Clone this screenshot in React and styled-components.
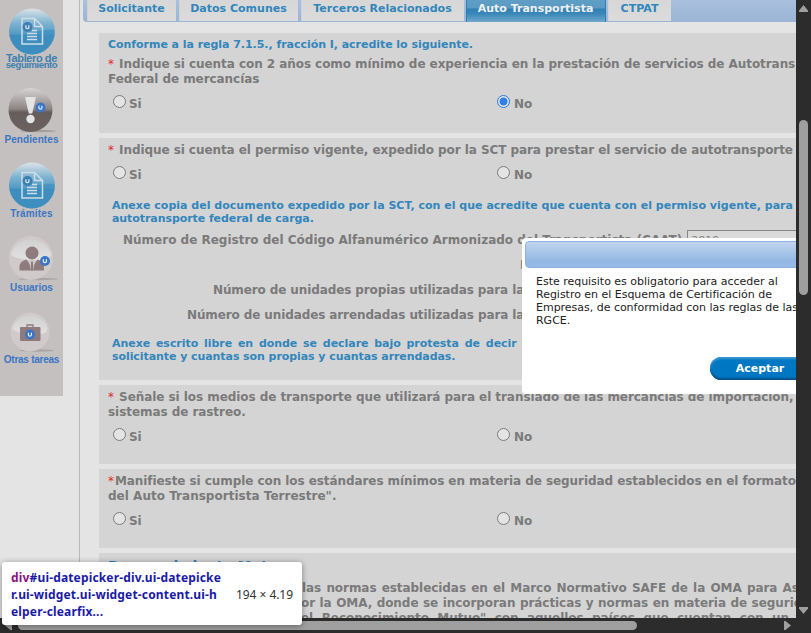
import React from 'react';
import styled, { createGlobalStyle, css } from 'styled-components';

const GlobalStyle = createGlobalStyle`
  * { box-sizing: border-box; }
  body { margin: 0; background: #e4e4e4; overflow: hidden; }
`;

const Screen = styled.div`
  position: relative;
  display: grid;
  grid-template: 618px 15px / 796px 15px;
  width: 811px;
  height: 633px;
  overflow: hidden;
  background: #2c2c2c;
  font-family: "DejaVu Sans", Verdana, sans-serif;
`;

const Viewport = styled.div`
  position: relative;
  display: flex;
  align-items: flex-start;
  overflow: hidden;
  background: #e4e4e4;
`;

/* ---------- sidebar ---------- */

const Sidebar = styled.nav`
  flex: none;
  width: 63px;
  height: 396px;
  padding-top: 8px;
  background: #c4c0bf;
`;

const SideItem = styled.a`
  display: flex;
  flex-direction: column;
  align-items: center;
  height: ${p => p.$h}px;
`;

const SideIcon = styled.svg`
  display: block;
  flex: none;
`;

const SideLabel = styled.span`
  margin-top: ${p => p.$mt || 0}px;
  font: bold ${p => p.$size || 10}px/${p => p.$lh || 10}px "Liberation Sans", Arial, sans-serif;
  letter-spacing: ${p => p.$ls || 0}px;
  color: ${p => p.$color || '#3b75c4'};
  white-space: nowrap;
`;

/* ---------- tabs ---------- */

const Main = styled.main`
  flex: none;
  width: 717px;
  height: 618px;
  margin-left: 16px;
  border-left: 1px solid #b9b9b9;
`;

const TabBar = styled.div`
  display: flex;
  height: 22px;
  margin-left: 3px;
  padding-left: 4px;
  overflow: hidden;
  border-bottom-left-radius: 4px;
  background: linear-gradient(#a9c0de, #9bb5d5);
`;

const Tab = styled.a`
  flex: none;
  width: ${p => p.$w}px;
  height: 21px;
  margin-right: ${p => p.$gap ?? 3}px;
  padding: 2px 1px 0 0;
  text-align: center;
  font-size: 11px;
  font-weight: bold;
  line-height: 13px;
  white-space: nowrap;
  color: #3286bb;
  border-left: 1px solid #cfd3d8;
  background: linear-gradient(#d6d7d6, #dbdbdb);
  ${p => p.$active && css`
    height: 22px;
    color: #f0f0f0;
    border: solid #2b7fb2;
    border-width: 0 1px;
    background: linear-gradient(#5f9fc6 0, #5a9bc3 8px, #2f80b4 9px, #3c88b9 14px, #70a8ca 22px);
  `}
`;

/* ---------- form panels ---------- */

const Panels = styled.div`
  display: flex;
  flex-direction: column;
  gap: 5px;
  margin: 11px 0 0 19px;
`;

const Panel = styled.section`
  flex: none;
  height: ${p => p.$h}px;
  padding: 5px 0 0 9px;
  overflow: hidden;
  background: #d4d4d4;
`;

const Line = styled.div`
  margin-top: ${p => p.$mt || 0}px;
  margin-left: ${p => p.$ml || 0}px;
  font-size: 12px;
  font-weight: bold;
  line-height: 15px;
  letter-spacing: ${p => p.$ls ?? -0.06}px;
  word-spacing: ${p => p.$ws || 0}px;
  white-space: pre;
  color: #7a7a7a;
`;

const NoteLine = styled(Line)`
  font-size: 11px;
  line-height: 13px;
  color: #3286bb;
`;

const SectionTitle = styled(Line)`
  font-size: 14px;
  color: #3286bb;
`;

const Required = styled.span`
  margin-right: 1px;
  color: #e02b2b;
  font-weight: normal;
`;

const RadioRow = styled.div`
  display: grid;
  grid-template-columns: 384px auto;
  margin: 8px 0 0 5px;
`;

const Option = styled.label`
  display: flex;
  gap: ${p => p.$gap}px;
  align-items: flex-start;
`;

const Radio = styled.span`
  width: 13px;
  height: 13px;
  border: 1px solid ${p => (p.$on ? '#2878dc' : '#7b7b7b')};
  border-radius: 50%;
  background: ${p => (p.$on ? 'radial-gradient(circle, #2f80e8 3.6px, #e4e4e4 4.4px)' : '#e4e4e4')};
`;

const FieldRow = styled.div`
  display: flex;
  align-items: flex-start;
  height: 25px;
  padding-left: ${p => p.$x}px;
`;

const TextField = styled.div`
  flex: none;
  width: 150px;
  height: 20px;
  margin: 5px 0 0 5px;
  padding: 3px 3px;
  border: 1px solid #868686;
  background: #dadada;
  font-size: 11px;
  line-height: 14px;
  color: #858585;
`;

/* ---------- dialog ---------- */

const Dialog = styled.div`
  position: absolute;
  left: 522px;
  top: 238px;
  width: 300px;
  height: 156px;
  padding: 3px;
  border-radius: 4px;
  background: #fff;
`;

const DialogTitle = styled.div`
  height: 27px;
  border: 1px solid #8db2e0;
  border-radius: 4px;
  background: linear-gradient(#c0d4ee, #94b8e4 75%, #97bbe5);
`;

const DialogText = styled.p`
  margin: 7px 0 0 11px;
  font-size: 11px;
  line-height: 13px;
  letter-spacing: -0.02px;
  white-space: pre;
  color: #222;
`;

const AcceptButton = styled.button`
  display: block;
  width: 102px;
  height: 23px;
  margin: 30px 0 0 185px;
  padding: 0 2px 0 0;
  border: 0;
  border-radius: 12px;
  background: #0077c2;
  box-shadow: inset 0 2px 2px #3a98d2, inset 0 -2px 2px #005085;
  color: #fff;
  font: bold 11px/23px "DejaVu Sans", Verdana, sans-serif;
`;

/* ---------- inspector tooltip ---------- */

const Tooltip = styled.div`
  position: absolute;
  left: 2px;
  top: 562px;
  display: flex;
  align-items: center;
  justify-content: space-between;
  width: 300px;
  height: 63px;
  padding: 1px 9px 0;
  border-radius: 3px;
  background: #fff;
  box-shadow: 0 1px 6px rgba(0, 0, 0, 0.4);
  font: 12px/17px "Noto Sans", "Open Sans", sans-serif;
`;

const Selector = styled.div`
  font-weight: bold;
  letter-spacing: 0.16px;
  white-space: pre;
  color: #1a1aa6;
`;

const TagName = styled.span`
  color: #881280;
`;

const Dimensions = styled.span`
  letter-spacing: -0.05px;
  color: #333;
`;

/* ---------- scrollbars ---------- */

const VerticalBar = styled.div`
  display: flex;
  flex-direction: column;
  align-items: center;
  padding-top: 4px;
`;

const VerticalThumb = styled.div`
  width: 9px;
  height: 175px;
  margin: 107px 0 311px;
  border-radius: 5px;
  background: #9f9f9f;
`;

const HorizontalBar = styled.div`
  display: flex;
  align-items: center;
  padding: 0 4px;
`;

const HorizontalThumb = styled.div`
  width: 621px;
  height: 9px;
  margin: 0 146px 0 5px;
  border-radius: 5px;
  background: #9f9f9f;
`;

const Arrow = styled.svg`
  display: block;
  flex: none;
`;

const Badge = ({ x, y, fill = '#3b75c4' }) => (
  <g>
    <circle cx={x} cy={y} r="5" fill={fill} />
    <path d={`M${x - 1.6} ${y - 1.8}v2.3q0 1.2 1.5 1.2t1.5-1.2v-2.3`} fill="none" stroke="#e8eef8" strokeWidth="1.2" />
  </g>
);

const DocumentIcon = ({ id }) => (
  <SideIcon width="50" height="47" viewBox="0 0 50 47">
    <defs>
      <linearGradient id={id} x1="0" y1="0" x2="0" y2="1">
        <stop offset="0" stopColor="#dce3e7" />
        <stop offset=".32" stopColor="#7db2d1" />
        <stop offset=".56" stopColor="#529ac4" />
        <stop offset=".58" stopColor="#448dbb" />
        <stop offset="1" stopColor="#3f91c1" />
      </linearGradient>
    </defs>
    <circle cx="25" cy="23.5" r="23" fill={`url(#${id})`} />
    <path d="M3 26Q12 29 25 25T47 22A23 23 0 0 1 25 46.500A23 23 0 0 1 3 26z" fill="#3b8dbf" opacity=".6" />
    <path d="M15 10.500h12.500l8 8v17.500H15zM27.500 10.500v8h8" fill="none" stroke="#cfdde6" strokeWidth="1.500" />
    <path d="M25 22.500h5M20 25.500h10M20 28.500h10M20 31.500h10" stroke="#cfdde6" strokeWidth="1.400" />
    <Badge x={20.5} y={19} fill="#3c80b3" />
  </SideIcon>
);

const AlertIcon = () => (
  <SideIcon width="52" height="46" viewBox="0 0 52 46">
    <defs>
      <linearGradient id="alert" x1="0" y1="0" x2="0" y2="1">
        <stop offset="0" stopColor="#d6d4d3" />
        <stop offset=".48" stopColor="#8b8483" />
        <stop offset=".55" stopColor="#655d5c" />
        <stop offset="1" stopColor="#6b6160" />
      </linearGradient>
    </defs>
    <ellipse cx="32" cy="43" rx="18" ry="1.2" fill="#a29d9c" />
    <circle cx="24.500" cy="22" r="22" fill="url(#alert)" />
    <path d="M19 9h11l-3.800 16.500h-3.400z" fill="#e4e4e4" />
    <circle cx="24.500" cy="31" r="4.200" fill="#e4e4e4" />
    <Badge x={34.5} y={19.5} />
  </SideIcon>
);

const PaleBall = ({ id, cx, cy, r }) => (
  <g>
    <defs>
      <linearGradient id={id} x1="0" y1="0" x2="0" y2="1">
        <stop offset="0" stopColor="#d2d1d1" />
        <stop offset="1" stopColor="#e2e1e1" />
      </linearGradient>
    </defs>
    <ellipse cx={cx + 7} cy={cy + r - 1} rx={r - 2} ry="1.2" fill="#aaa5a4" />
    <circle cx={cx} cy={cy} r={r} fill="#d0caca" />
    <path d={`M${cx - r + 2} ${cy - 4}a${r - 1} ${r - 1} 0 0 1 ${2 * r - 4} 0q0 8-${r - 2} 6t-${r - 2}-6z`} fill={`url(#${id})`} />
  </g>
);

const UsersIcon = () => (
  <SideIcon width="54" height="46" viewBox="0 0 54 46">
    <PaleBall id="users" cx={26} cy={22} r={22} />
    <circle cx="27" cy="17" r="6.500" fill="#8d7b7e" />
    <path d="M14.500 34.500v-4q0-5 7-7l5.500 8 5.500-8q6.500 2 6.500 7v4z" fill="#8d7b7e" />
    <path d="M24 23.500l3 3 3-3-1.500 11h-3z" fill="#d0caca" />
    <path d="M26.200 25.500h1.600l.8 9h-3.200z" fill="#8d7b7e" />
    <Badge x={40} y={25} />
  </SideIcon>
);

const BriefcaseIcon = () => (
  <SideIcon width="50" height="42" viewBox="0 0 50 42">
    <PaleBall id="case" cx={23} cy={20} r={19.5} />
    <path d="M20 15.500v-2.500h6v2.500" fill="none" stroke="#8d7b7e" strokeWidth="1.300" />
    <rect x="13" y="15" width="20.500" height="14" rx="1" fill="#8d7b7e" />
    <Badge x={23} y={22.500} />
  </SideIcon>
);

const Star = () => <Required>*</Required>;

const YesNo = ({ value }) => (
  <RadioRow>
    <Option $gap={3}>
      <Radio $on={value === 'si'} />
      <Line $mt={2}>Si</Line>
    </Option>
    <Option $gap={4}>
      <Radio $on={value === 'no'} />
      <Line $mt={2}>No</Line>
    </Option>
  </RadioRow>
);

export default function App() {
  return (
    <>
      <GlobalStyle />
      <Screen>
        <Viewport>
          <Sidebar>
            <SideItem $h={80}>
              <DocumentIcon id="docA" />
              <SideLabel $size={11} $lh={6} $ls={-0.4} $color="#3c80b0">Tablero de</SideLabel>
              <SideLabel $size={9.5} $lh={7} $ls={-0.4} $color="#3c80b0">seguimiento</SideLabel>
            </SideItem>
            <SideItem $h={74}>
              <AlertIcon />
              <SideLabel $mt={1} $ls={0.07}>Pendientes</SideLabel>
            </SideItem>
            <SideItem $h={74}>
              <DocumentIcon id="docB" />
              <SideLabel $ls={0.2}>Trámites</SideLabel>
            </SideItem>
            <SideItem $h={76}>
              <UsersIcon />
              <SideLabel $mt={1}>Usuarios</SideLabel>
            </SideItem>
            <SideItem $h={60}>
              <BriefcaseIcon />
              <SideLabel $mt={1} $ls={-0.25}>Otras tareas</SideLabel>
            </SideItem>
          </Sidebar>

          <Main>
            <TabBar>
              <Tab $w={89}>Solicitante</Tab>
              <Tab $w={119}>Datos Comunes</Tab>
              <Tab $w={163} $gap={2}>Terceros Relacionados</Tab>
              <Tab $w={140} $gap={2} $active>Auto Transportista</Tab>
              <Tab $w={63}>CTPAT</Tab>
            </TabBar>

            <Panels>
              <Panel $h={100}>
                <NoteLine $ls={-0.04}>Conforme a la regla 7.1.5., fracción I, acredite lo siguiente.</NoteLine>
                <Line $mt={6}><Star /> Indique si cuenta con 2 años como mínimo de experiencia en la prestación de servicios de Autotransporte</Line>
                <Line>Federal de mercancías</Line>
                <YesNo value="no" />
              </Panel>

              <Panel $h={242}>
                <Line $ls={-0.07}><Star /> Indique si cuenta el permiso vigente, expedido por la SCT para prestar el servicio de autotransporte federal</Line>
                <YesNo />
                <NoteLine $mt={16} $ml={4} $ls={0.015}>Anexe copia del documento expedido por la SCT, con el que acredite que cuenta con el permiso vigente, para</NoteLine>
                <NoteLine $ml={4} $ls={-0.07}>autotransporte federal de carga.</NoteLine>
                <FieldRow $x={15}>
                  <Line $mt={8} $ls={0}>Número de Registro del Código Alfanumérico Armonizado del Transportista (CAAT)</Line>
                  <TextField>2819</TextField>
                </FieldRow>
                <FieldRow $x={412}>
                  <Line $mt={8}>Registro</Line>
                </FieldRow>
                <FieldRow $x={105}>
                  <Line $mt={8} $ls={-0.11}>Número de unidades propias utilizadas para la prestación</Line>
                </FieldRow>
                <FieldRow $x={79}>
                  <Line $mt={8} $ls={-0.11}>Número de unidades arrendadas utilizadas para la prestación</Line>
                </FieldRow>
                <NoteLine $mt={12} $ml={4} $ls={-0.04} $ws={2}>Anexe escrito libre en donde se declare bajo protesta de decir verdad</NoteLine>
                <NoteLine $ml={4} $ls={-0.07}>solicitante y cuantas son propias y cuantas arrendadas.</NoteLine>
              </Panel>

              <Panel $h={79}>
                <Line><Star /> Señale si los medios de transporte que utilizará para el translado de las mercancías de importación,</Line>
                <Line>sistemas de rastreo.</Line>
                <YesNo />
              </Panel>

              <Panel $h={79}>
                <Line $ls={-0.07}><Star />Manifieste si cumple con los estándares mínimos en materia de seguridad establecidos en el formato</Line>
                <Line $ls={0.02}>del Auto Transportista Terrestre".</Line>
                <YesNo />
              </Panel>

              <Panel $h={100}>
                <SectionTitle $mt={1} $ls={-0.1}>Reconocimiento Mutuo</SectionTitle>
                <Line $mt={7} $ml={194} $ws={1.1}>las normas establecidas en el Marco Normativo SAFE de la OMA para Asegurar</Line>
                <Line $ml={193} $ws={0.4}>or la OMA, donde se incorporan prácticas y normas en materia de seguridad</Line>
                <Line $ml={193} $ws={4.4}>el Reconocimiento Mutuo" con aquellos países que cuentan con un programa</Line>
              </Panel>
            </Panels>
          </Main>

          <Dialog role="dialog">
            <DialogTitle />
            <DialogText>{`Este requisito es obligatorio para acceder al
Registro en el Esquema de Certificación de
Empresas, de conformidad con las reglas de las
RGCE.`}</DialogText>
            <AcceptButton>Aceptar</AcceptButton>
          </Dialog>
        </Viewport>

        <VerticalBar>
          <Arrow width="9" height="9" viewBox="0 0 9 9"><path d="M4.500 1L9 6.500V8H0V6.500z" fill="#9f9f9f" /></Arrow>
          <VerticalThumb />
          <Arrow width="9" height="9" viewBox="0 0 9 9"><path d="M4.500 8L9 2.500V1H0V2.500z" fill="#9f9f9f" /></Arrow>
        </VerticalBar>
        <HorizontalBar>
          <Arrow width="9" height="9" viewBox="0 0 9 9"><path d="M1 4.500L6.500 0H8V9H6.500z" fill="#9f9f9f" /></Arrow>
          <HorizontalThumb />
          <Arrow width="9" height="9" viewBox="0 0 9 9"><path d="M8 4.500L2.500 0H1V9H2.500z" fill="#9f9f9f" /></Arrow>
        </HorizontalBar>

        <Tooltip>
          <Selector>
            <TagName>div</TagName>{`#ui-datepicker-div.ui-datepicke
r.ui-widget.ui-widget-content.ui-h
elper-clearfix...`}
          </Selector>
          <Dimensions>194 × 4.19</Dimensions>
        </Tooltip>
      </Screen>
    </>
  );
}
